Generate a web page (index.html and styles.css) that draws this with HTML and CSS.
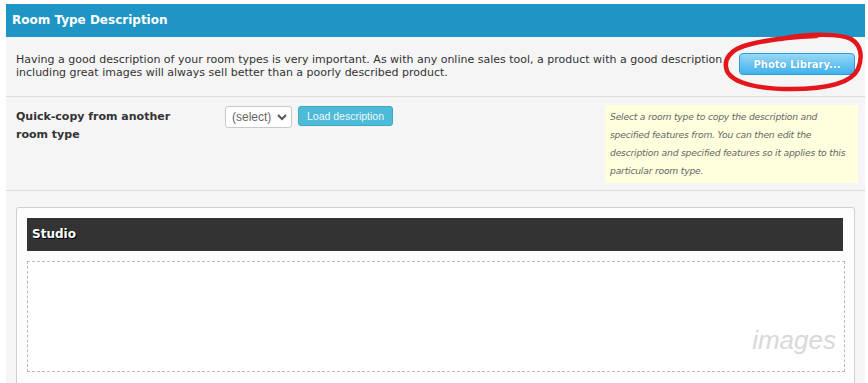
FILE: index.html
```html
<!DOCTYPE html>
<html>
<head>
<meta charset="utf-8">
<link rel="stylesheet" href="styles.css">
</head>
<body>
<div class="panel">
  <div class="panel-head">Room Type Description</div>
  <div class="intro">
    <p class="intro-text">Having a good description of your room types is very important. As with any online sales tool, a product with a good description including great images will always sell better than a poorly described product.</p>
    <button class="photo-btn">Photo Library...</button>
    <svg class="scribble" width="146" height="64" viewBox="0 0 146 64">
      <path d="M60 7 C 90 1, 120 2, 130 7 C 140 13, 142 24, 137 37 C 131 50, 110 57, 70 57 C 40 57, 12 52, 6 39 C 2 28, 8 17, 30 12 C 50 7, 70 5, 96 4" fill="none" stroke="#e3171b" stroke-width="4.5" stroke-linecap="round"/>
    </svg>
  </div>
  <div class="quick">
    <div class="quick-label">Quick-copy from another room type</div>
    <div class="quick-controls">
      <div class="select">(select) <svg width="10" height="7" viewBox="0 0 10 7"><path d="M1 1 L5 5 L9 1" fill="none" stroke="#555" stroke-width="2"/></svg></div>
      <button class="load-btn">Load description</button>
    </div>
    <div class="note">Select a room type to copy the description and specified features from. You can then edit the description and specified features so it applies to this particular room type.</div>
  </div>
  <div class="rooms">
    <div class="card">
      <div class="card-head">Studio</div>
      <div class="dropzone"><span class="drop-label">images</span></div>
    </div>
  </div>
</div>
</body>
</html>
```
FILE: styles.css
```css
body {
  margin: 0;
  background: #fff;
  font-family: "DejaVu Sans", Verdana, sans-serif;
}
.panel {
  margin: 4px 0 0 6px;
  width: 859px;
}
.panel-head {
  background: #1f95c6;
  color: #fff;
  font-weight: bold;
  font-size: 12px;
  height: 33px;
  line-height: 33px;
  padding-left: 6px;
}
.intro {
  position: relative;
  background: #f5f5f5;
  border-bottom: 1px solid #dcdcdc;
  height: 59px;
  display: flex;
  align-items: flex-start;
  padding: 0 10px;
}
.intro-text {
  margin: 16px 0 0 0;
  font-size: 11px;
  line-height: 13px;
  color: #333;
  width: 720px;
}
.photo-btn {
  margin: 16px 0 0 auto;
  width: 116px;
  height: 22px;
  border: 1px solid #2b9dd8;
  border-radius: 4px;
  background: linear-gradient(#97d8f7, #3fb2ec);
  color: #fff;
  font-family: "DejaVu Sans", Verdana, sans-serif;
  font-weight: bold;
  font-size: 10px;
  padding: 0;
  text-shadow: 0 0 1px #2b8ec4;
}
.scribble {
  position: absolute;
  left: 715px;
  top: -5px;
}
.quick {
  background: #f5f5f5;
  border-bottom: 1px solid #dcdcdc;
  height: 93px;
  display: flex;
  align-items: flex-start;
  padding: 0 7px 0 10px;
}
.quick-label {
  width: 170px;
  margin-top: 11px;
  font-weight: bold;
  font-size: 11px;
  line-height: 18px;
  color: #333;
}
.quick-controls {
  margin: 9px 0 0 39px;
  display: flex;
  gap: 6px;
  align-items: flex-start;
}
.select {
  box-sizing: border-box;
  width: 67px;
  height: 22px;
  border: 1px solid #c8c8c8;
  border-radius: 3px;
  background: #fff;
  font-family: "Liberation Sans", Arial, sans-serif;
  font-size: 12px;
  color: #666;
  display: flex;
  align-items: center;
  gap: 6px;
  padding-left: 6px;
}
.load-btn {
  box-sizing: border-box;
  height: 20px;
  width: 95px;
  background: #4dbad8;
  border: 1px solid #3aa8c8;
  border-radius: 3px;
  color: #eef9fc;
  font-family: "Liberation Sans", Arial, sans-serif;
  font-size: 10.5px;
  padding: 0;
  line-height: 16px;
}
.note {
  box-sizing: border-box;
  margin: 8px 0 0 auto;
  width: 253px;
  height: 78px;
  background: #ffffdd;
  padding: 3px 2px 3px 5px;
  font-size: 9.2px;
  letter-spacing: -0.2px;
  font-style: italic;
  line-height: 18px;
  color: #666;
}
.rooms {
  background: #f5f5f5;
  padding: 16px 10px 0 10px;
  height: 180px;
  overflow: hidden;
}
.card {
  background: #fdfdfd;
  border: 1px solid #cfcfcf;
  border-radius: 3px;
  padding: 10px 9px 20px 10px;
}
.card-head {
  background: #333;
  color: #fff;
  font-weight: bold;
  font-size: 12px;
  height: 33px;
  line-height: 33px;
  padding-left: 5px;
  margin-right: 2px;
  text-shadow: 1px 1px 0 #000;
}
.dropzone {
  box-sizing: border-box;
  margin-top: 10px;
  height: 111px;
  border: 1px dashed #bbb;
  background: #fff;
  display: flex;
  justify-content: flex-end;
  align-items: flex-end;
  padding: 0 8px 16px 0;
}
.drop-label {
  font-family: "Liberation Sans", Arial, sans-serif;
  font-style: italic;
  font-size: 26px;
  color: #d8d8d8;
  line-height: 30px;
}
```
